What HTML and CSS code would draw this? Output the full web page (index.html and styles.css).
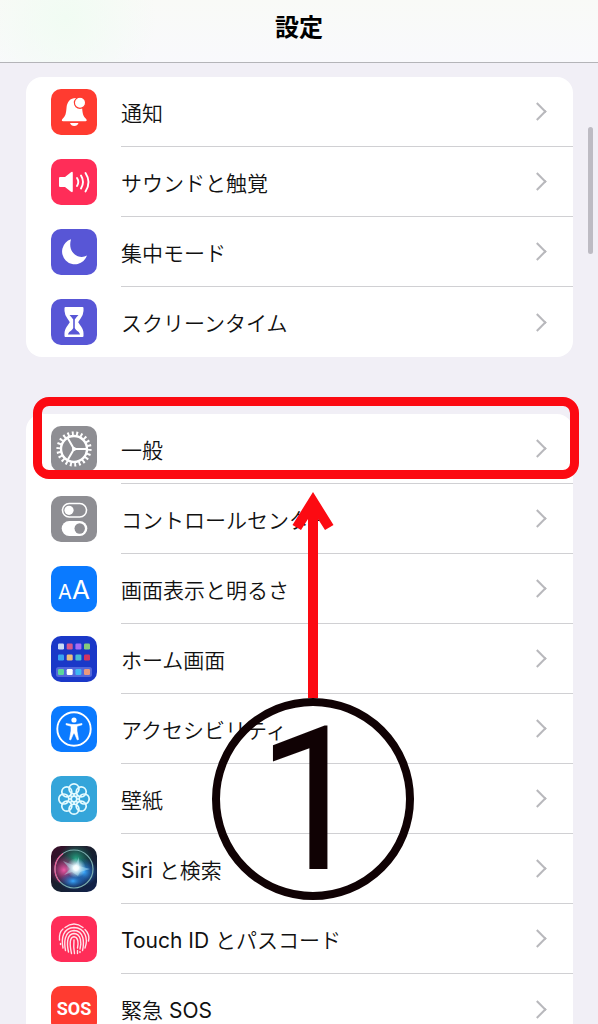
FILE: index.html
```html
<!DOCTYPE html>
<html lang="ja">
<head>
  <meta charset="utf-8">
  <meta name="viewport" content="width=device-width, initial-scale=1">
  <title>設定</title>
  <link rel="stylesheet" href="styles.css">
</head>
<body>
  <header>
    <h1>設定</h1>
  </header>

  <main>
    <ul class="group">
      <li>
        <a class="row" href="#notifications">
          <svg class="icon red" viewBox="0 0 46 46">
            <path fill="#fff" d="M25 9C19 9 16 13 15.500 19C15 25 14.500 27 11.200 30.300Q10.200 32.200 12 32.200H34.600Q36.400 32.200 35.400 30.300C32 27 31.500 25 31 17ZM19 34H27.500Q26.500 37 23.200 37Q20 37 19 34Z"/>
            <circle cx="29" cy="13.800" r="5.600" fill="#fff" stroke="#ff3b30" stroke-width="1.200"/>
          </svg>
          <span class="label">通知</span>
        </a>
      </li>
      <li>
        <a class="row" href="#sounds">
          <svg class="icon pink" viewBox="0 0 46 46">
            <path fill="#fff" d="M9 18H14L20 13.200Q21.800 12.200 21.800 14V32Q21.800 33.800 20 32.800L14 28H9Q8 28 8 27V19Q8 18 9 18Z"/>
            <g fill="none" stroke="#fff" stroke-width="1.900" stroke-linecap="round">
              <path d="M26 19Q28.600 23 26 27"/>
              <path d="M30 16.500Q34 23 30 29.500"/>
              <path d="M34.500 14Q40.500 23 34.500 32.500"/>
            </g>
          </svg>
          <span class="label">サウンドと触覚</span>
        </a>
      </li>
      <li>
        <a class="row" href="#focus">
          <svg class="icon purple" viewBox="0 0 46 46">
            <path fill="#fff" d="M20 10.300A12.800 12.800 0 1 0 36 26.600C28 31 16 24 20 10.300Z"/>
          </svg>
          <span class="label">集中モード</span>
        </a>
      </li>
      <li>
        <a class="row" href="#screentime">
          <svg class="icon purple" viewBox="0 0 46 46">
            <path fill="#fff" stroke="#fff" stroke-width="2" stroke-linejoin="round" d="M14.500 9H31.500V12C31.500 17 28 19 26 23.300C28 27 31.500 29 31.500 34V37H14.500V34C14.500 29 18 27 20 23.300C18 19 14.500 17 14.500 12Z"/>
            <path fill="#5856d6" d="M18.500 16H27.500Q25.500 18 23.800 20.500V29C24.500 31.500 28 32 29 35.500H17C18 32 21.500 31.500 22.200 29V20.500Q20.500 18 18.500 16Z"/>
          </svg>
          <span class="label">スクリーンタイム</span>
        </a>
      </li>
    </ul>

    <ul class="group">
      <li class="current">
        <a class="row" href="#general">
          <svg class="icon gray" viewBox="0 0 46 46">
            <g fill="none" stroke="#fff">
              <circle cx="23" cy="23" r="13" stroke-width="2.400"/>
              <circle cx="23" cy="23" r="15.600" stroke-width="4" pathLength="66" stroke-dasharray="1.300 1.700"/>
              <path stroke-width="2" d="M23 23H36M23 23L16.500 11.700M23 23L16.500 34.300"/>
            </g>
            <circle cx="23" cy="23" r="2" fill="#fff"/>
          </svg>
          <span class="label">一般</span>
        </a>
        <!-- 手順の注釈 -->
        <div class="highlight"></div>
        <div class="callout">
          <svg class="arrow" viewBox="0 0 42 206">
            <path fill="#fc0a12" d="M21 0L41.500 33L33 38L26 27V206H16V27L9 38L0.500 33Z"/>
          </svg>
          <div class="step">1</div>
        </div>
      </li>
      <li>
        <a class="row" href="#control">
          <svg class="icon gray" viewBox="0 0 46 46">
            <rect x="11.500" y="7.500" width="24" height="13.500" rx="6.700" fill="none" stroke="#fff" stroke-width="1.600"/>
            <circle cx="18" cy="14.300" r="4.600" fill="#fff"/>
            <rect x="10.700" y="25" width="25.600" height="15" rx="7.500" fill="#fff"/>
            <circle cx="28.700" cy="32.500" r="5.200" fill="#8e8e93"/>
          </svg>
          <span class="label">コントロールセンター</span>
        </a>
      </li>
      <li>
        <a class="row" href="#display">
          <span class="icon blue text-size"><small>A</small><big>A</big></span>
          <span class="label">画面表示と明るさ</span>
        </a>
      </li>
      <li>
        <a class="row" href="#home">
          <svg class="icon navy" viewBox="0 0 46 46">
            <rect x="5" y="31" width="36" height="10" rx="2.500" fill="#5267db"/>
            <rect x="7" y="7.500" width="6" height="6" rx="1.200" fill="#c8dcf6"/>
            <rect x="15.700" y="7.500" width="6" height="6" rx="1.200" fill="#d8588c"/>
            <rect x="24.400" y="7.500" width="6" height="6" rx="1.200" fill="#a56cf6"/>
            <rect x="33" y="7.500" width="6" height="6" rx="1.200" fill="#86c97c"/>
            <rect x="7" y="18.500" width="6" height="6" rx="1.200" fill="#38a4f2"/>
            <rect x="15.700" y="18.500" width="6" height="6" rx="1.200" fill="#ebbd7c"/>
            <rect x="24.400" y="18.500" width="6" height="6" rx="1.200" fill="#48bcd4"/>
            <rect x="33" y="18.500" width="6" height="6" rx="1.200" fill="#d13462"/>
            <rect x="7" y="33" width="6" height="6" rx="1.200" fill="#5bd69c"/>
            <rect x="15.700" y="33" width="6" height="6" rx="1.200" fill="#fff"/>
            <rect x="24.400" y="33" width="6" height="6" rx="1.200" fill="#3db8f4"/>
            <rect x="33" y="33" width="6" height="6" rx="1.200" fill="#eb987c"/>
          </svg>
          <span class="label">ホーム画面</span>
        </a>
      </li>
      <li>
        <a class="row" href="#accessibility">
          <svg class="icon blue" viewBox="0 0 46 46">
            <circle cx="23" cy="23" r="16.700" fill="none" stroke="#fff" stroke-width="1.900"/>
            <circle cx="23" cy="14" r="2.600" fill="#fff"/>
            <path fill="#fff" stroke="#fff" stroke-width="0.600" stroke-linejoin="round" d="M15 17.500L21 18.500H25L31 17.500V18.800L26 20.300V25L27.500 33.500L26.300 34L23.500 27.500H22.500L19.700 34L18.500 33.500L20 25V20.300L15 18.800Z"/>
          </svg>
          <span class="label">アクセシビリティ</span>
        </a>
      </li>
      <li>
        <a class="row" href="#wallpaper">
          <svg class="icon sky" viewBox="0 0 46 46">
            <g fill="none" stroke="#e4fbff" stroke-width="1.700">
              <circle cx="23" cy="12.800" r="5"/>
              <circle cx="30.200" cy="15.800" r="5"/>
              <circle cx="33.200" cy="23" r="5"/>
              <circle cx="30.200" cy="30.200" r="5"/>
              <circle cx="23" cy="33.200" r="5"/>
              <circle cx="15.800" cy="30.200" r="5"/>
              <circle cx="12.800" cy="23" r="5"/>
              <circle cx="15.800" cy="15.800" r="5"/>
              <circle cx="23" cy="23" r="2.800"/>
              <path d="M23 17.800V20M23 26V28.200M17.800 23H20M26 23H28.200M19.300 19.300L21 21M25 25L26.700 26.700M26.700 19.300L25 21M21 25L19.300 26.700"/>
            </g>
          </svg>
          <span class="label">壁紙</span>
        </a>
      </li>
      <li>
        <a class="row" href="#siri">
          <svg class="icon" viewBox="0 0 46 46">
            <defs>
              <linearGradient id="siri-bg" x1="0" y1="0" x2="1" y2="1">
                <stop offset="0" stop-color="#3d0e28"/>
                <stop offset="0.500" stop-color="#17202f"/>
                <stop offset="1" stop-color="#10224e"/>
              </linearGradient>
              <radialGradient id="siri-pink">
                <stop offset="0" stop-color="#f05aa8"/>
                <stop offset="1" stop-color="#b02a78" stop-opacity="0"/>
              </radialGradient>
              <radialGradient id="siri-green">
                <stop offset="0" stop-color="#28a484"/>
                <stop offset="1" stop-color="#0f6a58" stop-opacity="0"/>
              </radialGradient>
              <radialGradient id="siri-blue">
                <stop offset="0" stop-color="#38a8ff"/>
                <stop offset="1" stop-color="#1c5cc0" stop-opacity="0"/>
              </radialGradient>
              <radialGradient id="siri-glow">
                <stop offset="0" stop-color="#fff"/>
                <stop offset="0.250" stop-color="#f2fcff"/>
                <stop offset="1" stop-color="#a8e8f8" stop-opacity="0"/>
              </radialGradient>
            </defs>
            <rect width="46" height="46" fill="url(#siri-bg)"/>
            <circle cx="25" cy="13" r="17" fill="url(#siri-green)"/>
            <circle cx="13" cy="24" r="15" fill="url(#siri-pink)"/>
            <circle cx="33" cy="26" r="14" fill="url(#siri-blue)"/>
            <ellipse cx="22" cy="35" rx="14" ry="9" fill="url(#siri-blue)"/>
            <circle cx="23" cy="23" r="19" fill="none" stroke="#7eb0b0" stroke-width="1.200"/>
            <path fill="none" stroke="#ec5a96" stroke-width="1.200" d="M9 36A19 19 0 0 1 12 7.500"/>
            <path fill="#b9eaf8" opacity="0.450" d="M12 15L24 20L28 11L28 20L39 23L29 26L27 30L21 26L13 29L19 23Z"/>
            <circle cx="25" cy="22" r="10" fill="url(#siri-glow)"/>
          </svg>
          <span class="label"><span><span class="latin">Siri</span> と検索</span></span>
        </a>
      </li>
      <li>
        <a class="row" href="#touchid">
          <svg class="icon pink" viewBox="0 0 46 46">
            <g fill="none" stroke="#ffe3ea" stroke-width="1.400" stroke-linecap="round">
              <path d="M14 11.500Q23 4.500 32 11.500"/>
              <path d="M8.500 24C8 18 9.500 15 12 13M9.500 28.500V27.500M34 13.500C37.500 17 38.500 21 37.500 25"/>
              <path d="M12 32C10 22 12 12 23 11.500C34 12 37.500 22 34 32"/>
              <path d="M14.500 34.500C13 27 13 15 23 14.500C33 15 33.500 26 31.500 34.500"/>
              <path d="M17.500 36C15.500 27 16 18 23 17.500C30.500 18 30.500 27 29 33"/>
              <path d="M20.500 37.500C18.500 28 18.500 21 23 20.700C27.500 21 27.500 28 26.500 32"/>
              <path d="M23 24C22.500 29 22.500 33 23.500 37.500M26.500 34.500V37.500M29 35.500V36.500"/>
            </g>
          </svg>
          <span class="label"><span><span class="latin">Touch ID</span> とパスコード</span></span>
        </a>
      </li>
      <li>
        <a class="row" href="#sos">
          <span class="icon red sos">SOS</span>
          <span class="label"><span>緊急 <span class="latin">SOS</span></span></span>
        </a>
      </li>
    </ul>
    <div class="scroll-thumb"></div>
  </main>
</body>
</html>
```

FILE: styles.css
```css
/* 全体のスタイル */
* {
  box-sizing: border-box;
}

body {
  display: flex;
  flex-direction: column;
  height: 100vh;
  margin: 0;
  overflow: hidden;
  background-color: #f1eff6;
  color: #111;
  font-family: Inter, "Noto Sans CJK JP", sans-serif;
}

/* ヘッダー */
header {
  flex: none;
  height: 63px;
  border-bottom: 1px solid #b4b4b8;
  background: radial-gradient(circle at 11% 30%, #f1fcf3, rgba(241, 252, 243, 0) 90px),
    linear-gradient(#f9faf7, #f9f9fc);
  text-align: center;
}

h1 {
  margin: 0;
  color: #000;
  font-size: 24px;
  font-weight: bold;
  line-height: 56px;
}

/* メインコンテンツ */
main {
  position: relative;
  flex: 1;
  min-height: 0;
  padding: 14px 25px 0 26px;
  overflow: hidden;
}

.group {
  margin: 0 0 57px;
  padding: 0;
  border-radius: 16px;
  background-color: #fff;
  list-style: none;
}

/* 設定の行 */
.row {
  display: flex;
  align-items: center;
  gap: 24px;
  height: 70px;
  padding-left: 25px;
  color: inherit;
  text-decoration: none;
}

.label {
  display: flex;
  flex: 1;
  align-items: center;
  justify-content: space-between;
  height: 70px;
  padding-right: 29px;
  border-bottom: 1px solid #d0d0d3;
  font-size: 21px;
  font-weight: 350;
}

.group li:last-child .label {
  border-bottom: none;
}

.label::after {
  content: "";
  width: 11px;
  height: 11px;
  border-top: 2px solid #b8b8bc;
  border-right: 2px solid #b8b8bc;
  transform: rotate(45deg);
}

.latin {
  font-weight: 400;
}

/* アイコン */
.icon {
  flex: none;
  width: 46px;
  height: 46px;
  border-radius: 10px;
  color: #fff;
}

.red { background-color: #ff3b30; }
.pink { background-color: #ff2d58; }
.purple { background-color: #5856d6; }
.gray { background-color: #8e8e93; }
.blue { background-color: #0a7aff; }
.navy { background-color: #1a38c8; }
.sky { background-color: #34a5da; }

.text-size {
  display: flex;
  align-items: baseline;
  justify-content: center;
  line-height: 48px;
}

.text-size small {
  font-size: 20px;
}

.text-size big {
  font-size: 26px;
}

.sos {
  font-family: Roboto, sans-serif;
  font-size: 18px;
  font-weight: bold;
  line-height: 46px;
  text-align: center;
}

/* 手順の注釈 */
.current {
  position: relative;
}

.highlight {
  position: absolute;
  top: -17px;
  right: -6px;
  left: 7px;
  height: 82px;
  border: 9px solid #fc0a12;
  border-radius: 16px;
  pointer-events: none;
}

.callout {
  position: absolute;
  top: 78px;
  left: 50%;
  display: flex;
  flex-direction: column;
  align-items: center;
  margin-left: -88px;
  pointer-events: none;
}

.arrow {
  width: 42px;
  height: 206px;
}

.step {
  width: 202px;
  height: 202px;
  border: 8px solid #100204;
  border-radius: 50%;
  color: #100204;
  font-family: Roboto, sans-serif;
  font-size: 200px;
  font-weight: 400;
  line-height: 190px;
  text-align: center;
}

/* スクロールバー */
.scroll-thumb {
  position: absolute;
  top: 64px;
  right: 5px;
  width: 5px;
  height: 127px;
  border-radius: 3px;
  background-color: #bdbbc3;
}
```
